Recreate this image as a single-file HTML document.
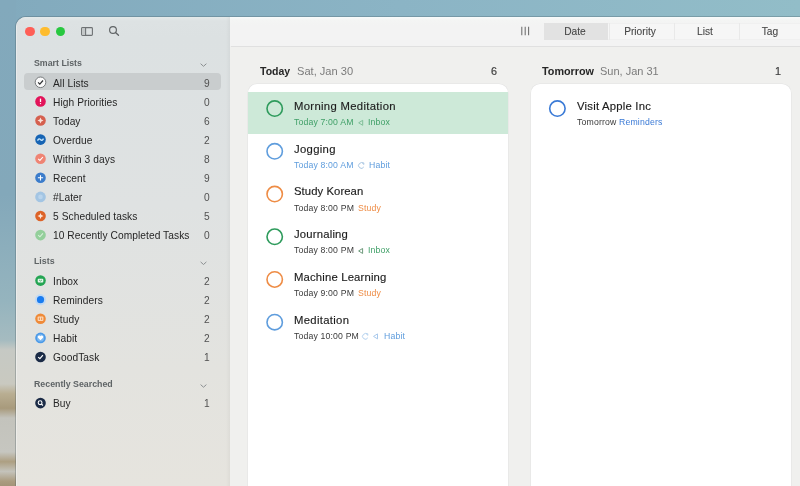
<!DOCTYPE html>
<html><head><meta charset="utf-8">
<style>
*{margin:0;padding:0;box-sizing:border-box}
html,body{width:800px;height:486px;overflow:hidden;font-family:"Liberation Sans",sans-serif}
body{position:relative;background:#86acc0}
.a{position:absolute}
.t{position:absolute;white-space:nowrap;will-change:transform}
svg{position:absolute;overflow:visible}
</style></head><body>

<div class="a" style="left:0;top:0;width:800px;height:486px;background:linear-gradient(90deg,#82aabd 0%,#8bb4c5 50%,#92bdc8 100%)"></div>
<div class="a" style="left:0;top:0;width:16px;height:486px;background:linear-gradient(180deg,#82a9bc 0%,#83a8ba 40%,#95b4be 62%,#a5bbc0 70%,#c6c9c4 72%,#c9c9c0 79%,#b9ae92 81%,#a89a7c 84%,#c3c3bc 86%,#c6c6c0 93%,#ad9f82 95%,#c4c3bb 97%,#ab9c80 99%,#a39478 100%)"></div>
<div class="a" style="left:16px;top:17px;width:784px;height:469px;border-top-left-radius:10px;overflow:hidden;background:#efefef;box-shadow:0 0 0 1px rgba(60,80,85,0.28)">
<div class="a" style="left:0;top:0;width:213.5px;height:469px;background:linear-gradient(180deg,#e4eaea 0px,#dde2e3 4px,#dce1e2 20px,#dfe2e2 40%,#e3e3df 75%,#e6e4de 100%)"></div>
<div class="a" style="left:0;top:0;width:1.2px;height:469px;background:rgba(255,255,255,0.35)"></div>
<div class="a" style="left:210px;top:0;width:3.5px;height:469px;background:linear-gradient(90deg,rgba(0,0,0,0) 0%,rgba(0,0,0,0.035) 100%)"></div>
<div class="a" style="left:213.5px;top:0;width:571px;height:29px;background:linear-gradient(180deg,#f8fbfb 0px,#f4f5f4 3px,#f3f3f3 8px)"></div>
<div class="a" style="left:215px;top:29px;width:571px;height:1px;background:#e0e0e0"></div>
<div class="a" style="left:213.5px;top:30px;width:571px;height:439px;background:#f0f0ee"></div>
</div>
<div class="a" style="left:25.00px;top:26.6px;width:9.6px;height:9.6px;border-radius:50%;background:#fe5f57"></div>
<div class="a" style="left:40.40px;top:26.6px;width:9.6px;height:9.6px;border-radius:50%;background:#febc2e"></div>
<div class="a" style="left:55.80px;top:26.6px;width:9.6px;height:9.6px;border-radius:50%;background:#28c840"></div>
<svg style="left:0;top:0" width="800" height="486"><rect x="81.6" y="27.6" width="10.8" height="7.8" rx="0.9" fill="none" stroke="#6e7274" stroke-width="1.1"/><rect x="82.2" y="28.2" width="3" height="6.6" fill="#c3c7c8"/><line x1="85.6" y1="27.6" x2="85.6" y2="35.4" stroke="#6e7274" stroke-width="1.1"/><circle cx="113.0" cy="30.0" r="3.4" fill="none" stroke="#5f6365" stroke-width="1.15"/><line x1="115.5" y1="32.5" x2="118.5" y2="35.3" stroke="#5f6365" stroke-width="1.3" stroke-linecap="round"/></svg>
<div class="t" style="left:34.00px;top:58.23px;font-size:8.8px;line-height:11.44px;color:#5f6466;font-weight:bold;letter-spacing:0px;">Smart Lists</div>
<svg style="left:0;top:0" width="1" height="1"><polyline points="200.6,63.70 203.5,66.30 206.4,63.70" fill="none" stroke="#8b8f91" stroke-width="1"/></svg>
<div class="a" style="left:24px;top:73.00px;width:197px;height:17.2px;border-radius:4px;background:#c9cdce"></div>
<svg style="left:0;top:0" width="1" height="1"><circle cx="40.5" cy="82.3" r="5.3" fill="#fafafa" stroke="#6b6e70" stroke-width="0.9"/><polyline points="38.1,82.39999999999999 39.8,84.1 43.0,80.5" fill="none" stroke="#2f3133" stroke-width="1.2"/></svg>
<div class="t" style="left:53.30px;top:76.64px;font-size:10.2px;line-height:13.26px;color:#262626;font-weight:normal;letter-spacing:0.07px;">All Lists</div>
<div class="t" style="right:590.20px;top:76.64px;font-size:10.2px;line-height:13.26px;color:#505050;font-weight:normal;letter-spacing:0px;">9</div>
<svg style="left:0;top:0" width="1" height="1"><circle cx="40.5" cy="101.4" r="5.3" fill="#e2145a"/><line x1="40.5" y1="98.60000000000001" x2="40.5" y2="102.0" stroke="#fff" stroke-width="1.3"/><circle cx="40.5" cy="103.60000000000001" r="0.7" fill="#fff"/></svg>
<div class="t" style="left:53.30px;top:95.74px;font-size:10.2px;line-height:13.26px;color:#262626;font-weight:normal;letter-spacing:0.07px;">High Priorities</div>
<div class="t" style="right:590.20px;top:95.74px;font-size:10.2px;line-height:13.26px;color:#505050;font-weight:normal;letter-spacing:0px;">0</div>
<svg style="left:0;top:0" width="1" height="1"><circle cx="40.5" cy="120.5" r="5.3" fill="#d5604f"/><polygon points="40.50,117.50 41.40,119.60 43.50,120.50 41.40,121.40 40.50,123.50 39.60,121.40 37.50,120.50 39.60,119.60" fill="#fbe0da"/></svg>
<div class="t" style="left:53.30px;top:114.84px;font-size:10.2px;line-height:13.26px;color:#262626;font-weight:normal;letter-spacing:0.07px;">Today</div>
<div class="t" style="right:590.20px;top:114.84px;font-size:10.2px;line-height:13.26px;color:#505050;font-weight:normal;letter-spacing:0px;">6</div>
<svg style="left:0;top:0" width="1" height="1"><circle cx="40.5" cy="139.6" r="5.3" fill="#1664b4"/><path d="M37.5,140.6 Q39.0,137.79999999999998 40.5,139.6 T43.5,138.6" fill="none" stroke="#c8e6fa" stroke-width="1.4"/></svg>
<div class="t" style="left:53.30px;top:133.94px;font-size:10.2px;line-height:13.26px;color:#262626;font-weight:normal;letter-spacing:0.07px;">Overdue</div>
<div class="t" style="right:590.20px;top:133.94px;font-size:10.2px;line-height:13.26px;color:#505050;font-weight:normal;letter-spacing:0px;">2</div>
<svg style="left:0;top:0" width="1" height="1"><circle cx="40.5" cy="158.7" r="5.3" fill="#ef8474"/><polyline points="38.2,158.79999999999998 39.9,160.39999999999998 42.9,157.0" fill="none" stroke="#fff" stroke-width="1.1"/></svg>
<div class="t" style="left:53.30px;top:153.04px;font-size:10.2px;line-height:13.26px;color:#262626;font-weight:normal;letter-spacing:0.07px;">Within 3 days</div>
<div class="t" style="right:590.20px;top:153.04px;font-size:10.2px;line-height:13.26px;color:#505050;font-weight:normal;letter-spacing:0px;">8</div>
<svg style="left:0;top:0" width="1" height="1"><circle cx="40.5" cy="177.8" r="5.3" fill="#3b7ccb"/><path d="M37.9,177.8 H43.1 M40.5,175.20000000000002 V180.4" fill="none" stroke="#fff" stroke-width="1.1"/></svg>
<div class="t" style="left:53.30px;top:172.14px;font-size:10.2px;line-height:13.26px;color:#262626;font-weight:normal;letter-spacing:0.07px;">Recent</div>
<div class="t" style="right:590.20px;top:172.14px;font-size:10.2px;line-height:13.26px;color:#505050;font-weight:normal;letter-spacing:0px;">9</div>
<svg style="left:0;top:0" width="1" height="1"><circle cx="40.5" cy="196.9" r="5.3" fill="#a3c5e3"/><circle cx="40.5" cy="196.9" r="2.3" fill="#b9d4ec"/></svg>
<div class="t" style="left:53.30px;top:191.24px;font-size:10.2px;line-height:13.26px;color:#262626;font-weight:normal;letter-spacing:0.07px;">#Later</div>
<div class="t" style="right:590.20px;top:191.24px;font-size:10.2px;line-height:13.26px;color:#505050;font-weight:normal;letter-spacing:0px;">0</div>
<svg style="left:0;top:0" width="1" height="1"><circle cx="40.5" cy="216.0" r="5.3" fill="#dd6328"/><polygon points="40.50,213.00 41.40,215.10 43.50,216.00 41.40,216.90 40.50,219.00 39.60,216.90 37.50,216.00 39.60,215.10" fill="#fde6d8"/></svg>
<div class="t" style="left:53.30px;top:210.34px;font-size:10.2px;line-height:13.26px;color:#262626;font-weight:normal;letter-spacing:0.07px;">5 Scheduled tasks</div>
<div class="t" style="right:590.20px;top:210.34px;font-size:10.2px;line-height:13.26px;color:#505050;font-weight:normal;letter-spacing:0px;">5</div>
<svg style="left:0;top:0" width="1" height="1"><circle cx="40.5" cy="235.1" r="5.3" fill="#93cf9b"/><polyline points="38.2,235.2 39.9,236.79999999999998 42.9,233.4" fill="none" stroke="#d9f0dc" stroke-width="1.1"/></svg>
<div class="t" style="left:53.30px;top:229.44px;font-size:10.2px;line-height:13.26px;color:#262626;font-weight:normal;letter-spacing:0.07px;">10 Recently Completed Tasks</div>
<div class="t" style="right:590.20px;top:229.44px;font-size:10.2px;line-height:13.26px;color:#505050;font-weight:normal;letter-spacing:0px;">0</div>
<div class="t" style="left:34.00px;top:256.43px;font-size:8.8px;line-height:11.44px;color:#5f6466;font-weight:bold;letter-spacing:0px;">Lists</div>
<svg style="left:0;top:0" width="1" height="1"><polyline points="200.6,261.90 203.5,264.50 206.4,261.90" fill="none" stroke="#8b8f91" stroke-width="1"/></svg>
<svg style="left:0;top:0" width="1" height="1"><circle cx="40.5" cy="280.6" r="5.3" fill="#24a553"/><rect x="37.7" y="278.8" width="5.6" height="3.8" rx="1" fill="#e6f5eb"/><polyline points="39.1,280.0 40.5,281.0 41.9,280.0" fill="none" stroke="#24a553" stroke-width="0.8"/></svg>
<div class="t" style="left:53.30px;top:274.94px;font-size:10.2px;line-height:13.26px;color:#262626;font-weight:normal;letter-spacing:0.07px;">Inbox</div>
<div class="t" style="right:590.20px;top:274.94px;font-size:10.2px;line-height:13.26px;color:#505050;font-weight:normal;letter-spacing:0px;">2</div>
<svg style="left:0;top:0" width="1" height="1"><circle cx="40.5" cy="299.7" r="5.6" fill="#c2daf3"/><circle cx="40.5" cy="299.7" r="3.6" fill="#1a7cf0"/></svg>
<div class="t" style="left:53.30px;top:294.04px;font-size:10.2px;line-height:13.26px;color:#262626;font-weight:normal;letter-spacing:0.07px;">Reminders</div>
<div class="t" style="right:590.20px;top:294.04px;font-size:10.2px;line-height:13.26px;color:#505050;font-weight:normal;letter-spacing:0px;">2</div>
<svg style="left:0;top:0" width="1" height="1"><circle cx="40.5" cy="318.8" r="5.3" fill="#ef8a38"/><rect x="37.6" y="316.5" width="5.8" height="4.6" rx="1" fill="#fbd9bb"/><rect x="38.8" y="317.6" width="1.2" height="2.4" fill="#ef9a55"/><rect x="41.0" y="317.6" width="1.2" height="2.4" fill="#ef9a55"/></svg>
<div class="t" style="left:53.30px;top:313.14px;font-size:10.2px;line-height:13.26px;color:#262626;font-weight:normal;letter-spacing:0.07px;">Study</div>
<div class="t" style="right:590.20px;top:313.14px;font-size:10.2px;line-height:13.26px;color:#505050;font-weight:normal;letter-spacing:0px;">2</div>
<svg style="left:0;top:0" width="1" height="1"><circle cx="40.5" cy="337.9" r="5.3" fill="#4b9ae8"/><circle cx="40.5" cy="337.9" r="3.6" fill="#7db8f0"/><path d="M40.5,340.29999999999995 L38.0,337.7 A1.3,1.3 0 0 1 40.5,336.29999999999995 A1.3,1.3 0 0 1 43.0,337.7 Z" fill="#fff"/></svg>
<div class="t" style="left:53.30px;top:332.24px;font-size:10.2px;line-height:13.26px;color:#262626;font-weight:normal;letter-spacing:0.07px;">Habit</div>
<div class="t" style="right:590.20px;top:332.24px;font-size:10.2px;line-height:13.26px;color:#505050;font-weight:normal;letter-spacing:0px;">2</div>
<svg style="left:0;top:0" width="1" height="1"><circle cx="40.5" cy="357.0" r="5.3" fill="#1b2b46"/><polyline points="38.2,357.1 39.9,358.7 42.9,355.1" fill="none" stroke="#fff" stroke-width="1.2"/></svg>
<div class="t" style="left:53.30px;top:351.34px;font-size:10.2px;line-height:13.26px;color:#262626;font-weight:normal;letter-spacing:0.07px;">GoodTask</div>
<div class="t" style="right:590.20px;top:351.34px;font-size:10.2px;line-height:13.26px;color:#505050;font-weight:normal;letter-spacing:0px;">1</div>
<div class="t" style="left:34.00px;top:379.13px;font-size:8.8px;line-height:11.44px;color:#5f6466;font-weight:bold;letter-spacing:0px;">Recently Searched</div>
<svg style="left:0;top:0" width="1" height="1"><polyline points="200.6,384.60 203.5,387.20 206.4,384.60" fill="none" stroke="#8b8f91" stroke-width="1"/></svg>
<svg style="left:0;top:0" width="1" height="1"><circle cx="40.5" cy="403.1" r="5.3" fill="#1b2b46"/><circle cx="40.1" cy="402.70000000000005" r="1.9" fill="none" stroke="#fff" stroke-width="1.1"/><line x1="41.4" y1="404.0" x2="42.9" y2="405.5" stroke="#fff" stroke-width="1.2"/></svg>
<div class="t" style="left:53.30px;top:397.44px;font-size:10.2px;line-height:13.26px;color:#262626;font-weight:normal;letter-spacing:0.07px;">Buy</div>
<div class="t" style="right:590.20px;top:397.44px;font-size:10.2px;line-height:13.26px;color:#505050;font-weight:normal;letter-spacing:0px;">1</div>
<svg style="left:0;top:0" width="1" height="1"><line x1="521.8" y1="26.8" x2="521.8" y2="35.3" stroke="#6c6c6c" stroke-width="1.05"/><line x1="525.2" y1="26.8" x2="525.2" y2="35.3" stroke="#6c6c6c" stroke-width="1.05"/><line x1="528.6" y1="26.8" x2="528.6" y2="35.3" stroke="#6c6c6c" stroke-width="1.05"/></svg>
<div class="a" style="left:544px;top:23.4px;width:256px;height:16.2px;background:#f6f6f6;box-shadow:inset 0 0.6px 0 #e9e9e9,inset 0 -0.6px 0 #e9e9e9"></div>
<div class="a" style="left:544px;top:23.4px;width:64px;height:16.2px;background:#e2e2e2"></div>
<div class="a" style="left:608.5px;top:23.4px;width:1px;height:16.2px;background:#e9e9e9"></div>
<div class="a" style="left:673.5px;top:23.4px;width:1px;height:16.2px;background:#e9e9e9"></div>
<div class="a" style="left:738.8px;top:23.4px;width:1px;height:16.2px;background:#e9e9e9"></div>
<div class="t" style="left:474.90px;width:200px;text-align:center;top:24.54px;font-size:10.2px;line-height:13.26px;color:#474747;font-weight:normal;letter-spacing:0px;-webkit-text-stroke:0.1px #474747">Date</div>
<div class="t" style="left:540.00px;width:200px;text-align:center;top:24.54px;font-size:10.2px;line-height:13.26px;color:#474747;font-weight:normal;letter-spacing:0px;-webkit-text-stroke:0.1px #474747">Priority</div>
<div class="t" style="left:604.90px;width:200px;text-align:center;top:24.54px;font-size:10.2px;line-height:13.26px;color:#474747;font-weight:normal;letter-spacing:0px;-webkit-text-stroke:0.1px #474747">List</div>
<div class="t" style="left:670.00px;width:200px;text-align:center;top:24.54px;font-size:10.2px;line-height:13.26px;color:#474747;font-weight:normal;letter-spacing:0px;-webkit-text-stroke:0.1px #474747">Tag</div>
<div class="a" style="left:248.1px;top:84px;width:260.2px;height:420px;border-radius:9px;background:#fff;box-shadow:0 0 0 0.5px #e2e2e2"></div>
<div class="a" style="left:531px;top:84px;width:260.1px;height:420px;border-radius:9px;background:#fff;box-shadow:0 0 0 0.5px #e2e2e2"></div>
<div class="t" style="left:259.60px;top:64.54px;font-size:10.5px;line-height:13.65px;color:#262626;font-weight:bold;letter-spacing:0px;">Today</div>
<div class="t" style="left:296.60px;top:63.94px;font-size:11.1px;line-height:14.43px;color:#7b7b7b;font-weight:normal;letter-spacing:0px;">Sat, Jan 30</div>
<div class="t" style="right:303.00px;top:64.24px;font-size:10.8px;line-height:14.04px;color:#3f3f3f;font-weight:normal;letter-spacing:0px;-webkit-text-stroke:0.2px #3f3f3f">6</div>
<div class="t" style="left:542.30px;top:64.24px;font-size:10.8px;line-height:14.04px;color:#262626;font-weight:bold;letter-spacing:0px;">Tomorrow</div>
<div class="t" style="left:600.30px;top:64.04px;font-size:11.0px;line-height:14.3px;color:#7b7b7b;font-weight:normal;letter-spacing:0px;">Sun, Jan 31</div>
<div class="t" style="right:19.00px;top:64.24px;font-size:10.8px;line-height:14.04px;color:#3f3f3f;font-weight:normal;letter-spacing:0px;-webkit-text-stroke:0.2px #3f3f3f">1</div>
<div class="a" style="left:248.1px;top:92px;width:260.2px;height:42px;background:#cde9d8"></div>
<svg style="left:0;top:0" width="1" height="1"><circle cx="274.7" cy="108.6" r="7.7" fill="none" stroke="#2e9b5c" stroke-width="1.6"/></svg>
<div class="t" style="left:294.40px;top:99.04px;font-size:11.3px;line-height:14.69px;color:#1c1c1c;font-weight:normal;letter-spacing:0.32px;-webkit-text-stroke:0.15px #1c1c1c">Morning Meditation</div>
<div class="t" style="left:294.40px;top:117.13px;font-size:8.7px;line-height:11.31px;color:#40a068;font-weight:normal;letter-spacing:0.16px;">Today 7:00 AM</div>
<svg style="left:0;top:0" width="1" height="1"><path d="M362.70,120.30 L358.70,122.80 L362.70,125.30 Z" fill="none" stroke="#7fbf98" stroke-width="1" stroke-linejoin="round"/></svg>
<div class="t" style="left:368.00px;top:117.13px;font-size:8.7px;line-height:11.31px;color:#40a068;font-weight:normal;letter-spacing:0.16px;">Inbox</div>
<svg style="left:0;top:0" width="1" height="1"><circle cx="274.7" cy="151.32" r="7.7" fill="none" stroke="#5f9ddd" stroke-width="1.6"/></svg>
<div class="t" style="left:294.40px;top:141.76px;font-size:11.3px;line-height:14.69px;color:#1c1c1c;font-weight:normal;letter-spacing:0.32px;-webkit-text-stroke:0.15px #1c1c1c">Jogging</div>
<div class="t" style="left:294.40px;top:159.85px;font-size:8.7px;line-height:11.31px;color:#5f9ddd;font-weight:normal;letter-spacing:0.16px;">Today 8:00 AM</div>
<svg style="left:0;top:0" width="1" height="1"><path d="M363.60,163.82 A2.8,2.8 0 1 0 363.80,166.92" fill="none" stroke="#a9c6e2" stroke-width="1"/><path d="M361.90,162.62 L363.90,162.92 L363.70,164.82" fill="none" stroke="#a9c6e2" stroke-width="0.9"/></svg>
<div class="t" style="left:369.10px;top:159.85px;font-size:8.7px;line-height:11.31px;color:#5f9ddd;font-weight:normal;letter-spacing:0.16px;">Habit</div>
<svg style="left:0;top:0" width="1" height="1"><circle cx="274.7" cy="194.04" r="7.7" fill="none" stroke="#ee8c45" stroke-width="1.6"/></svg>
<div class="t" style="left:294.40px;top:184.48px;font-size:11.3px;line-height:14.69px;color:#1c1c1c;font-weight:normal;letter-spacing:0.07px;-webkit-text-stroke:0.15px #1c1c1c">Study Korean</div>
<div class="t" style="left:294.40px;top:202.57px;font-size:8.7px;line-height:11.31px;color:#3a3a3a;font-weight:normal;letter-spacing:0.16px;">Today 8:00 PM</div>
<div class="t" style="left:358.00px;top:202.57px;font-size:8.7px;line-height:11.31px;color:#ee8c45;font-weight:normal;letter-spacing:0.16px;">Study</div>
<svg style="left:0;top:0" width="1" height="1"><circle cx="274.7" cy="236.76" r="7.7" fill="none" stroke="#2e9b5c" stroke-width="1.6"/></svg>
<div class="t" style="left:294.40px;top:227.20px;font-size:11.3px;line-height:14.69px;color:#1c1c1c;font-weight:normal;letter-spacing:0.19px;-webkit-text-stroke:0.15px #1c1c1c">Journaling</div>
<div class="t" style="left:294.40px;top:245.29px;font-size:8.7px;line-height:11.31px;color:#3a3a3a;font-weight:normal;letter-spacing:0.16px;">Today 8:00 PM</div>
<svg style="left:0;top:0" width="1" height="1"><path d="M362.60,248.46 L358.60,250.96 L362.60,253.46 Z" fill="none" stroke="#6e9a7c" stroke-width="1" stroke-linejoin="round"/></svg>
<div class="t" style="left:368.40px;top:245.29px;font-size:8.7px;line-height:11.31px;color:#40a068;font-weight:normal;letter-spacing:0.16px;">Inbox</div>
<svg style="left:0;top:0" width="1" height="1"><circle cx="274.7" cy="279.48" r="7.7" fill="none" stroke="#ee8c45" stroke-width="1.6"/></svg>
<div class="t" style="left:294.40px;top:269.92px;font-size:11.3px;line-height:14.69px;color:#1c1c1c;font-weight:normal;letter-spacing:0.17px;-webkit-text-stroke:0.15px #1c1c1c">Machine Learning</div>
<div class="t" style="left:294.40px;top:288.01px;font-size:8.7px;line-height:11.31px;color:#3a3a3a;font-weight:normal;letter-spacing:0.16px;">Today 9:00 PM</div>
<div class="t" style="left:358.00px;top:288.01px;font-size:8.7px;line-height:11.31px;color:#ee8c45;font-weight:normal;letter-spacing:0.16px;">Study</div>
<svg style="left:0;top:0" width="1" height="1"><circle cx="274.7" cy="322.2" r="7.7" fill="none" stroke="#5f9ddd" stroke-width="1.6"/></svg>
<div class="t" style="left:294.40px;top:312.64px;font-size:11.3px;line-height:14.69px;color:#1c1c1c;font-weight:normal;letter-spacing:0.32px;-webkit-text-stroke:0.15px #1c1c1c">Meditation</div>
<div class="t" style="left:294.40px;top:330.73px;font-size:8.7px;line-height:11.31px;color:#3a3a3a;font-weight:normal;letter-spacing:0.16px;">Today 10:00 PM</div>
<svg style="left:0;top:0" width="1" height="1"><path d="M367.60,334.70 A2.8,2.8 0 1 0 367.80,337.80" fill="none" stroke="#b3d0ee" stroke-width="1"/><path d="M365.90,333.50 L367.90,333.80 L367.70,335.70" fill="none" stroke="#b3d0ee" stroke-width="0.9"/></svg>
<svg style="left:0;top:0" width="1" height="1"><path d="M377.50,333.90 L373.50,336.40 L377.50,338.90 Z" fill="none" stroke="#a9c9ec" stroke-width="1" stroke-linejoin="round"/></svg>
<div class="t" style="left:383.80px;top:330.73px;font-size:8.7px;line-height:11.31px;color:#5f9ddd;font-weight:normal;letter-spacing:0.16px;">Habit</div>
<svg style="left:0;top:0" width="1" height="1"><circle cx="557.4" cy="108.6" r="7.7" fill="none" stroke="#3a7ad6" stroke-width="1.6"/></svg>
<div class="t" style="left:576.60px;top:99.04px;font-size:11.3px;line-height:14.69px;color:#1c1c1c;font-weight:normal;letter-spacing:0.22px;-webkit-text-stroke:0.15px #1c1c1c">Visit Apple Inc</div>
<div class="t" style="left:576.60px;top:117.13px;font-size:8.7px;line-height:11.31px;color:#3a3a3a;font-weight:normal;letter-spacing:0.16px;">Tomorrow</div>
<div class="t" style="left:619.00px;top:117.13px;font-size:8.7px;line-height:11.31px;color:#3a7ad6;font-weight:normal;letter-spacing:0.16px;">Reminders</div>
</body></html>
